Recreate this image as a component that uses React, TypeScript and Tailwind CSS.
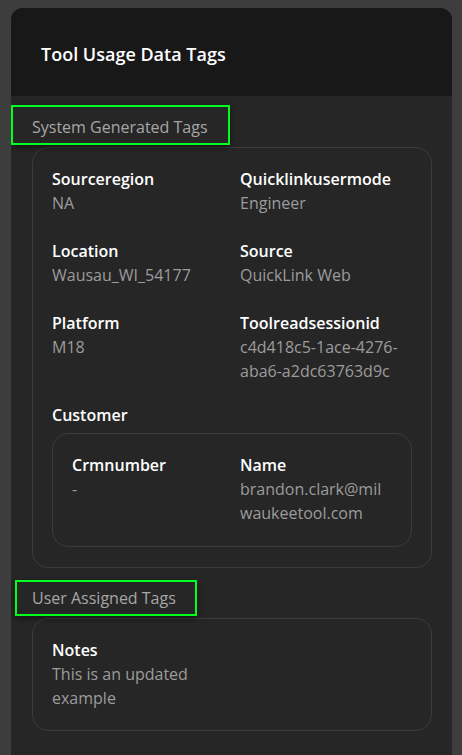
import type { ReactNode } from 'react'

interface Tag {
  label: string
  value: string
}

const systemTags: Tag[] = [
  { label: 'Sourceregion', value: 'NA' },
  { label: 'Quicklinkusermode', value: 'Engineer' },
  { label: 'Location', value: 'Wausau_WI_54177' },
  { label: 'Source', value: 'QuickLink Web' },
  { label: 'Platform', value: 'M18' },
  { label: 'Toolreadsessionid', value: 'c4d418c5-1ace-4276-aba6-a2dc63763d9c' },
]

const customerTags: Tag[] = [
  { label: 'Crmnumber', value: '-' },
  { label: 'Name', value: 'brandon.clark@milwaukeetool.com' },
]

const userTags: Tag[] = [{ label: 'Notes', value: 'This is an updated example' }]

function TagField({ tag }: { tag: Tag }) {
  return (
    <div className="min-w-0 leading-6">
      <div className="text-base font-semibold text-white">{tag.label}</div>
      <div className="text-base text-[#9c9c9c] break-words">{tag.value}</div>
    </div>
  )
}

function TagGrid({ tags }: { tags: Tag[] }) {
  return (
    <div className="grid grid-cols-2 gap-x-4 gap-y-6">
      {tags.map((t) => (
        <TagField key={t.label} tag={t} />
      ))}
    </div>
  )
}

function SectionTitle({ children, outline }: { children: ReactNode; outline: string }) {
  return (
    <div className="relative h-6 leading-6 text-base text-[#a6a6a6]">
      {/* highlight frame around the section heading */}
      <span className={`absolute border-2 border-[#00ff1e] shadow-[0_2px_6px_rgba(0,0,0,0.5)] ${outline}`} />
      <span className="relative">{children}</span>
    </div>
  )
}

export default function App() {
  return (
    <div className="min-h-[755px] bg-[#3d3d3d] pl-[11px] pr-[10px] pt-2" style={{ fontFamily: '"Open Sans", "Noto Sans", sans-serif' }}>
      <div className="rounded-t-xl overflow-hidden bg-[#262626] min-h-[747px]">
        <div className="h-[88px] bg-[#181818] flex items-center px-[30px]">
          <h1 className="text-lg font-semibold text-white pt-1">Tool Usage Data Tags</h1>
        </div>

        <div className="pl-[21px] pr-[20px] pt-[19px] pb-6 flex flex-col gap-[18px]">
          <section>
            <SectionTitle outline="-left-[21px] -top-[10px] w-[219px] h-[40px]">System Generated Tags</SectionTitle>
            <div className="mt-2 rounded-2xl border border-[#3b3b3b] px-[19px] pt-[19px] pb-5">
              <TagGrid tags={systemTags} />
              <div className="mt-5">
                <div className="text-base font-semibold text-white leading-6">Customer</div>
                <div className="mt-1.5 rounded-2xl border border-[#3b3b3b] px-[19px] pt-[19px] pb-[21px]">
                  <TagGrid tags={customerTags} />
                </div>
              </div>
            </div>
          </section>

          <section>
            <SectionTitle outline="-left-[17px] -top-[6px] w-[182px] h-[36px]">User Assigned Tags</SectionTitle>
            <div className="mt-2 rounded-2xl border border-[#3b3b3b] px-[19px] pt-[19px] pb-5">
              <TagGrid tags={userTags} />
            </div>
          </section>
        </div>
      </div>
    </div>
  )
}
